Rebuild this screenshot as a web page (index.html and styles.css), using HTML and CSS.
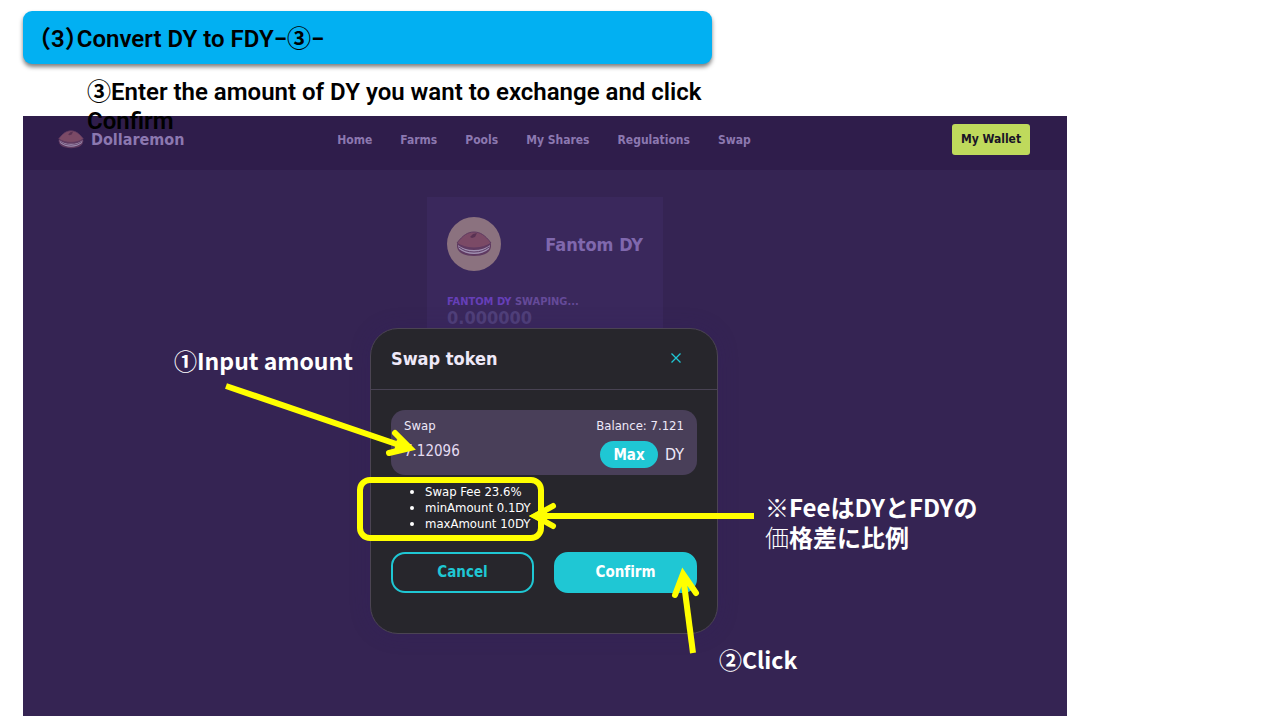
FILE: index.html
```html
<!DOCTYPE html>
<html lang="ja">
<head>
    <meta charset="UTF-8">
    <meta name="viewport" content="width=device-width, initial-scale=1.0">
    <title>Convert DY to FDY</title>
    <link rel="stylesheet" href="styles.css">
</head>
<body>
    <h1 class="banner"><span class="paren">（3）</span>Convert DY to FDY−③−</h1>
    <p class="lead">③Enter the amount of DY you want to exchange and click Confirm</p>

    <!-- dorayaki, shared by the logo and the card -->
    <svg class="sprite" aria-hidden="true">
        <symbol id="dorayaki" viewBox="0 0 36 26">
            <path d="M1 13 C0 21 7 25 18 25 C29 25 36 21 35 13 Z" fill="#5f3a61"/>
            <path d="M2 14 Q8 19 18 19 Q28 19 34 14 L33 18 Q27 23 18 23 Q9 23 3 18 Z" fill="#a08fb0"/>
            <path d="M3 16 Q9 21 18 21 Q27 21 33 16" fill="none" stroke="#593861" stroke-width="1"/>
            <path d="M1 12 C7 4 12 1 18 1 C24 1 29 4 35 12 C31 15 25 17 18 17 C11 17 5 15 1 12 Z" fill="#7b4a66" stroke="#5f3a61" stroke-width="1"/>
            <path d="M14 6 L17 3 L21 2 L19 6 L16 7 Z" fill="#593253"/>
        </symbol>
    </svg>

    <main class="app">
        <header class="navbar">
            <a class="brand" href="#"><svg class="brand-icon" aria-hidden="true"><use href="#dorayaki"/></svg>Dollaremon</a>
            <nav class="links">
                <a href="#">Home</a>
                <a href="#">Farms</a>
                <a href="#">Pools</a>
                <a href="#">My Shares</a>
                <a href="#">Regulations</a>
                <a href="#">Swap</a>
            </nav>
            <button class="wallet" type="button">My Wallet</button>
        </header>

        <section class="card">
            <div class="card-head">
                <div class="coin"><svg class="coin-icon" aria-hidden="true"><use href="#dorayaki"/></svg></div>
                <h2>Fantom DY</h2>
            </div>
            <div class="card-label"><span>FANTOM DY</span> SWAPING...</div>
            <div class="card-value">0.000000</div>
        </section>

        <form class="modal">
            <div class="modal-head">
                <h2>Swap token</h2>
                <button class="close" type="button" aria-label="Close">
                    <svg viewBox="0 0 12 12" width="12" height="12"><path d="M1.5 1.5 L10.5 10.5 M10.5 1.5 L1.5 10.5" stroke="#1fc7d4" stroke-width="1.3"/></svg>
                </button>
            </div>
            <div class="modal-body">
                <div class="field">
                    <div class="field-row">
                        <label for="amount">Swap</label>
                        <span>Balance: 7.121</span>
                    </div>
                    <div class="field-row">
                        <input id="amount" type="text" value="7.12096">
                        <div class="unit">
                            <button class="max" type="button">Max</button>
                            <span>DY</span>
                        </div>
                    </div>
                </div>
                <ul class="notes">
                    <li>Swap Fee 23.6%</li>
                    <li>minAmount 0.1DY</li>
                    <li>maxAmount 10DY</li>
                </ul>
                <div class="actions">
                    <button class="cancel" type="button">Cancel</button>
                    <button class="confirm" type="button">Confirm</button>
                </div>
            </div>
        </form>

        <!-- callouts drawn over the app -->
        <div class="callouts">
            <svg class="arrows" viewBox="0 0 1044 600" width="1044" height="600" aria-hidden="true">
                <g fill="none" stroke="#ffff00" stroke-width="6">
                    <rect x="337" y="364" width="181" height="58" rx="10"/>
                    <path d="M203 270 L385 332"/>
                    <path d="M731 400 L513 400"/>
                    <path d="M670 537 L660 460"/>
                    <g stroke-linecap="round">
                        <path d="M372 317 L387 332 L366 337"/>
                        <path d="M530 390 L512 400 L530 410"/>
                        <path d="M652 479 L660 458 L673 477"/>
                    </g>
                </g>
                <g fill="#ffff00">
                    <path d="M391 334 L374 323 L371 335 Z"/>
                    <path d="M506 400 L524 391 L524 409 Z"/>
                    <path d="M659 454 L653 471 L668 470 Z"/>
                </g>
            </svg>
            <p class="note note-input">①Input amount</p>
            <p class="note note-fee">※FeeはDYとFDYの<br><span class="thin">価</span>格差に比例</p>
            <p class="note note-click">②Click</p>
        </div>
    </main>
</body>
</html>
```
FILE: styles.css
```css
* {
    box-sizing: border-box;
}
body {
    margin: 0;
    padding: 11px 213px 4px 23px;
    background: white;
    color: black;
    font-family: "DejaVu Sans Condensed", "DejaVu Sans", sans-serif;
}
h1, h2, p, ul {
    margin: 0;
}
a {
    color: inherit;
    text-decoration: none;
}
button, input {
    font-family: inherit;
    border: none;
    padding: 0;
}
button {
    cursor: pointer;
}
.sprite {
    position: absolute;
    width: 0;
    height: 0;
}
.banner {
    width: 66%;
    padding: 14px 16px 10px;
    border-radius: 9px;
    background: #02b0f2;
    box-shadow: 0 3px 4px rgba(0, 0, 0, 0.5);
    font: 600 24px/29px Roboto, "Noto Sans CJK JP", sans-serif;
    white-space: nowrap;
}
.paren {
    font-feature-settings: "halt";
}
.lead {
    position: relative;
    z-index: 1;
    width: 60%;
    margin: 14px 0 -20px 64px;
    font: 600 24px/29px Roboto, "Noto Sans CJK JP", sans-serif;
}
.app {
    position: relative;
    min-height: 600px;
    background: #352453;
    overflow: hidden;
}
.navbar {
    display: grid;
    grid-template-columns: 1fr auto 1fr;
    align-items: center;
    height: 54px;
    padding: 0 37px 7px 35px;
    background: #2f1d4b;
    color: #8c78b0;
    font-weight: bold;
    font-size: 12px;
}
.brand {
    display: flex;
    align-items: center;
    gap: 7px;
    font-size: 16px;
}
.brand-icon {
    width: 26px;
    height: 19px;
}
.links {
    display: flex;
    gap: 28px;
}
.wallet {
    justify-self: end;
    width: 78px;
    height: 31px;
    padding-bottom: 2px;
    border-radius: 3px;
    background: #bfda5c;
    color: #191326;
    font-weight: bold;
    font-size: 12px;
}
.card {
    width: 236px;
    height: 300px;
    margin: 27px auto 0;
    padding: 20px;
    background: #3a285c;
    color: #8068ae;
}
.card-head {
    display: flex;
    justify-content: space-between;
    align-items: center;
}
.card-head h2 {
    font-size: 18px;
}
.coin {
    display: grid;
    place-items: center;
    width: 54px;
    height: 54px;
    border-radius: 50%;
    background: #8b727f;
}
.coin-icon {
    width: 36px;
    height: 26px;
}
.card-label {
    margin-top: 24px;
    color: #654a99;
    font-weight: bold;
    font-size: 11px;
    line-height: 14px;
}
.card-label span {
    color: #663fb8;
}
.card-value {
    color: #50407a;
    font-weight: bold;
    font-size: 18px;
    line-height: 18px;
}
.modal {
    position: absolute;
    top: 212px;
    left: 50%;
    width: 348px;
    height: 306px;
    margin-left: -175px;
    border: 1px solid #4b4453;
    border-radius: 28px;
    background: #27262c;
    box-shadow: 0 0 20px rgba(50, 30, 95, 0.3);
    color: #eee8f8;
}
.modal-head {
    display: flex;
    justify-content: space-between;
    align-items: center;
    height: 61px;
    padding: 0 35px 2px 20px;
    border-bottom: 1px solid #484253;
}
.modal-head h2 {
    font-size: 18px;
}
.close {
    display: flex;
    background: none;
}
.modal-body {
    padding: 20px;
}
.field {
    height: 65px;
    padding: 8px 13px;
    border-radius: 14px;
    background: #493f59;
    font-size: 13px;
}
.field-row {
    display: flex;
    justify-content: space-between;
    line-height: 16px;
}
.field input {
    width: 120px;
    height: 34px;
    background: none;
    color: #e5dcf2;
    font-size: 15px;
}
.unit {
    display: flex;
    align-items: center;
    gap: 7px;
    padding-top: 7px;
    font-size: 16px;
}
.max {
    width: 58px;
    height: 27px;
    border-radius: 14px;
    background: #1fc7d4;
    color: white;
    font-weight: bold;
    font-size: 15px;
}
.notes {
    margin-top: 9px;
    padding-left: 34px;
    color: white;
    font-size: 13px;
    line-height: 16px;
}
.actions {
    display: grid;
    grid-template-columns: 1fr 1fr;
    gap: 20px;
    margin-top: 20px;
}
.cancel, .confirm {
    height: 41px;
    padding-bottom: 2px;
    border: 2px solid #1fc7d4;
    border-radius: 14px;
    font-weight: bold;
    font-size: 15px;
    font-variant-ligatures: none;
}
.cancel {
    background: none;
    color: #1fc7d4;
}
.confirm {
    background: #1fc7d4;
    color: white;
}
.callouts {
    position: absolute;
    top: 0;
    left: 50%;
    width: 1044px;
    margin-left: -522px;
    pointer-events: none;
}
.arrows {
    display: block;
}
.note {
    position: absolute;
    color: white;
    font: bold 24px/30px "Noto Sans CJK JP", sans-serif;
    white-space: nowrap;
}
.note-input {
    top: 229px;
    left: 151px;
    font-size: 23px;
}
.note-fee {
    top: 376px;
    left: 742px;
}
.note-click {
    top: 528px;
    left: 696px;
    font-size: 23px;
}
.thin {
    font-weight: 300;
}
```
